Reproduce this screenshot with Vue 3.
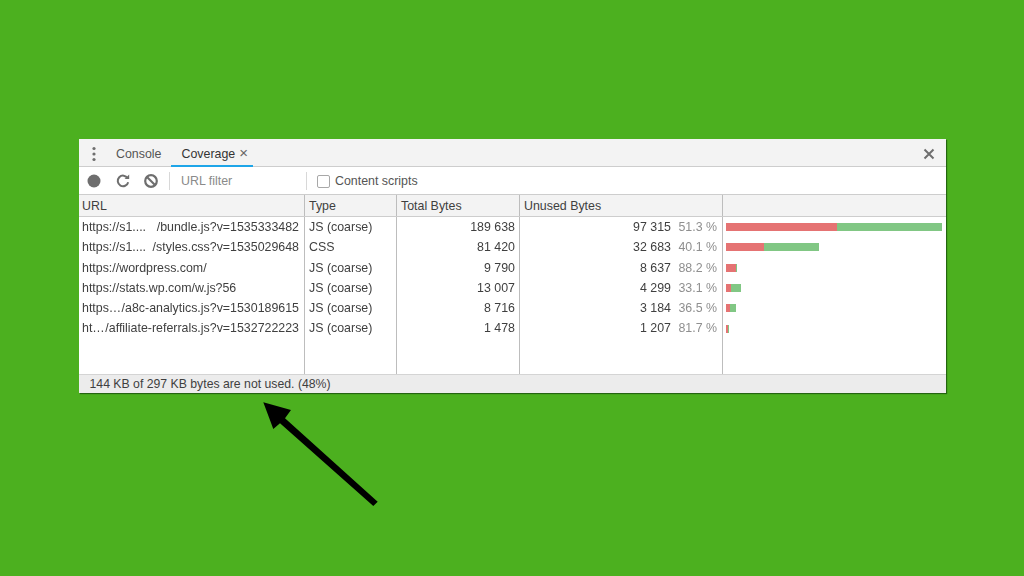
<script setup>
const rows = [
  { head: 'https://s1....', tail: '/bundle.js?v=1535333482', type: 'JS (coarse)', total: '189 638', unused: '97 315', pct: '51.3 %', red: 111, green: 105 },
  { head: 'https://s1....', tail: '/styles.css?v=1535029648', type: 'CSS', total: '81 420', unused: '32 683', pct: '40.1 %', red: 38, green: 55 },
  { head: 'https://wordpress.com/', tail: '', type: 'JS (coarse)', total: '9 790', unused: '8 637', pct: '88.2 %', red: 10, green: 1 },
  { head: 'https://stats.wp.com/w.js?56', tail: '', type: 'JS (coarse)', total: '13 007', unused: '4 299', pct: '33.1 %', red: 5, green: 10 },
  { head: 'https…', tail: '/a8c-analytics.js?v=1530189615', type: 'JS (coarse)', total: '8 716', unused: '3 184', pct: '36.5 %', red: 4, green: 6 },
  { head: 'ht…', tail: '/affiliate-referrals.js?v=1532722223', type: 'JS (coarse)', total: '1 478', unused: '1 207', pct: '81.7 %', red: 1.5, green: 0.5 }
];
</script>

<template>
  <div class="page">
    <div class="panel">
      <div class="tabs">
        <svg class="dots" width="6" height="16" viewBox="0 0 6 16">
          <circle cx="3" cy="2.5" r="1.6" />
          <circle cx="3" cy="8" r="1.6" />
          <circle cx="3" cy="13.5" r="1.6" />
        </svg>
        <div class="tab first">Console</div>
        <div class="tab active">Coverage<span class="tab_close">×</span></div>
        <svg class="close" width="12" height="12" viewBox="0 0 12 12">
          <path d="M1.5 1.5 L10.5 10.5 M10.5 1.5 L1.5 10.5" />
        </svg>
      </div>

      <div class="toolbar">
        <svg class="tool" width="16" height="16" viewBox="0 0 16 16">
          <circle cx="8" cy="8" r="6.5" fill="#6e6e6e" />
        </svg>
        <svg class="tool" width="16" height="16" viewBox="0 0 16 16">
          <path d="M12.6 5.2 A5.3 5.3 0 1 0 13.2 9.2" fill="none" stroke="#6e6e6e" stroke-width="2" />
          <path d="M9.6 5.9 L14.2 5.9 L14.2 1.4 Z" fill="#6e6e6e" />
        </svg>
        <svg class="tool" width="16" height="16" viewBox="0 0 16 16">
          <circle cx="8" cy="8" r="5.8" fill="none" stroke="#6e6e6e" stroke-width="2.2" />
          <path d="M4 4 L12 12" stroke="#6e6e6e" stroke-width="2.2" />
        </svg>
        <div class="filter">URL filter</div>
        <label class="scripts"><span class="checkbox"></span>Content scripts</label>
      </div>

      <div class="row head">
        <div class="cell">URL</div>
        <div class="cell">Type</div>
        <div class="cell">Total Bytes</div>
        <div class="cell">Unused Bytes</div>
        <div class="cell last"></div>
      </div>

      <div class="row" v-for="r in rows" :key="r.tail + r.head">
        <div class="cell url"><span>{{ r.head }}</span><span>{{ r.tail }}</span></div>
        <div class="cell">{{ r.type }}</div>
        <div class="cell num">{{ r.total }}</div>
        <div class="cell num">
          {{ r.unused }}<span class="pct">{{ r.pct }}</span>
        </div>
        <div class="cell last bar_cell">
          <span class="bar red" :style="{ width: r.red + 'px' }"></span>
          <span class="bar green" :style="{ width: r.green + 'px' }"></span>
        </div>
      </div>

      <div class="row filler">
        <div class="cell"></div>
        <div class="cell"></div>
        <div class="cell"></div>
        <div class="cell"></div>
        <div class="cell last"></div>
      </div>

      <div class="status">144 KB of 297 KB bytes are not used. (48%)</div>
    </div>

    <svg class="arrow" width="130" height="120" viewBox="0 0 130 120">
      <path d="M3.3 2.3 L31 10 L25 18.3 L117.7 101.7 L113.3 106 L20 23.3 L13.3 29 Z" fill="#000" />
    </svg>
  </div>
</template>

<style>
html, body {
  margin: 0;
  background: #4cb01f;
}
</style>

<style scoped>
.page {
  position: relative;
  width: 1024px;
  height: 576px;
  padding: 139px 78px 0 79px;
  box-sizing: border-box;
  overflow: hidden;
  background: #4cb01f;
  font-family: "Liberation Sans", Arial, sans-serif;
  font-size: 12.4px;
  color: #3f3f3f;
}

.panel {
  height: 254px;
  display: flex;
  flex-direction: column;
  background: #fff;
  box-shadow: 1px 1px 1px rgba(20, 70, 10, .7);
  filter: blur(.35px);
}

/* tab bar */
.tabs {
  height: 28px;
  display: flex;
  align-items: stretch;
  background: #f3f3f3;
  border-bottom: 1px solid #cdcdcd;
  box-sizing: border-box;
}

.dots {
  fill: #6e6e6e;
  margin: 7px 0 0 12px;
}

.tab {
  padding: 7.5px 10px 0;
  color: #555;
}

.tab.first {
  margin-left: 9px;
}

.tab.active {
  padding-right: 5px;
  color: #333;
  border-bottom: 2px solid #1ea5e8;
  margin-bottom: -1px;
}

.tab_close {
  font-size: 15px;
  line-height: 12px;
  color: #666;
  margin-left: 4px;
}

.close {
  margin: 9px 11px 0 auto;
  fill: none;
  stroke: #6e6e6e;
  stroke-width: 2;
}

/* toolbar */
.toolbar {
  height: 28px;
  display: flex;
  align-items: center;
  padding: 1px 0 0 7px;
  box-sizing: border-box;
  background: #fff;
  border-bottom: 1px solid #cdcdcd;
}

.tool {
  margin-right: 12.5px;
}

.filter {
  width: 125px;
  height: 18px;
  line-height: 18px;
  margin-left: -3px;
  padding-left: 11.5px;
  color: #8a8a8a;
  border-left: 1px solid #d8d8d8;
  border-right: 1px solid #d8d8d8;
}

.scripts {
  display: flex;
  align-items: center;
  margin-left: 10px;
  color: #555;
}

.checkbox {
  width: 11px;
  height: 11px;
  margin-right: 5px;
  background: #fff;
  border: 1px solid #a8a8a8;
  border-radius: 2px;
}

/* table */
.row {
  display: grid;
  grid-template-columns: 226px 92px 123px 203px 1fr;
  height: 20.3px;
}

.row.head {
  height: 22px;
  background: #f3f3f3;
  border-bottom: 1px solid #cdcdcd;
  box-sizing: border-box;
}

.row.filler {
  flex: 1;
}

.cell {
  padding: 0 4px;
  line-height: 21.3px;
  border-right: 1px solid #bdbdbd;
  white-space: pre;
  overflow: hidden;
  min-width: 0;
}

.head .cell {
  line-height: 22px;
}

.cell.url {
  display: flex;
  justify-content: space-between;
  padding: 0 5px 0 3px;
}

.head .cell:first-child {
  padding-left: 3px;
}

.cell.num {
  text-align: right;
}

.cell.num:nth-child(4) {
  padding-right: 5px;
}

.pct {
  display: inline-block;
  width: 46px;
  color: #8f8f8f;
}

.cell.last {
  border-right: none;
}

.bar_cell {
  display: flex;
  align-items: center;
  padding-left: 3px;
}

.bar {
  height: 8px;
  flex: none;
}

.red {
  background: #e57373;
}

.green {
  background: #81c784;
}

.status {
  height: 19px;
  line-height: 18px;
  padding-left: 10.5px;
  font-size: 12.25px;
  background: #ececec;
  border-top: 1px solid #d4d4d4;
  box-sizing: border-box;
}

.arrow {
  position: absolute;
  left: 260px;
  top: 400px;
}
</style>
